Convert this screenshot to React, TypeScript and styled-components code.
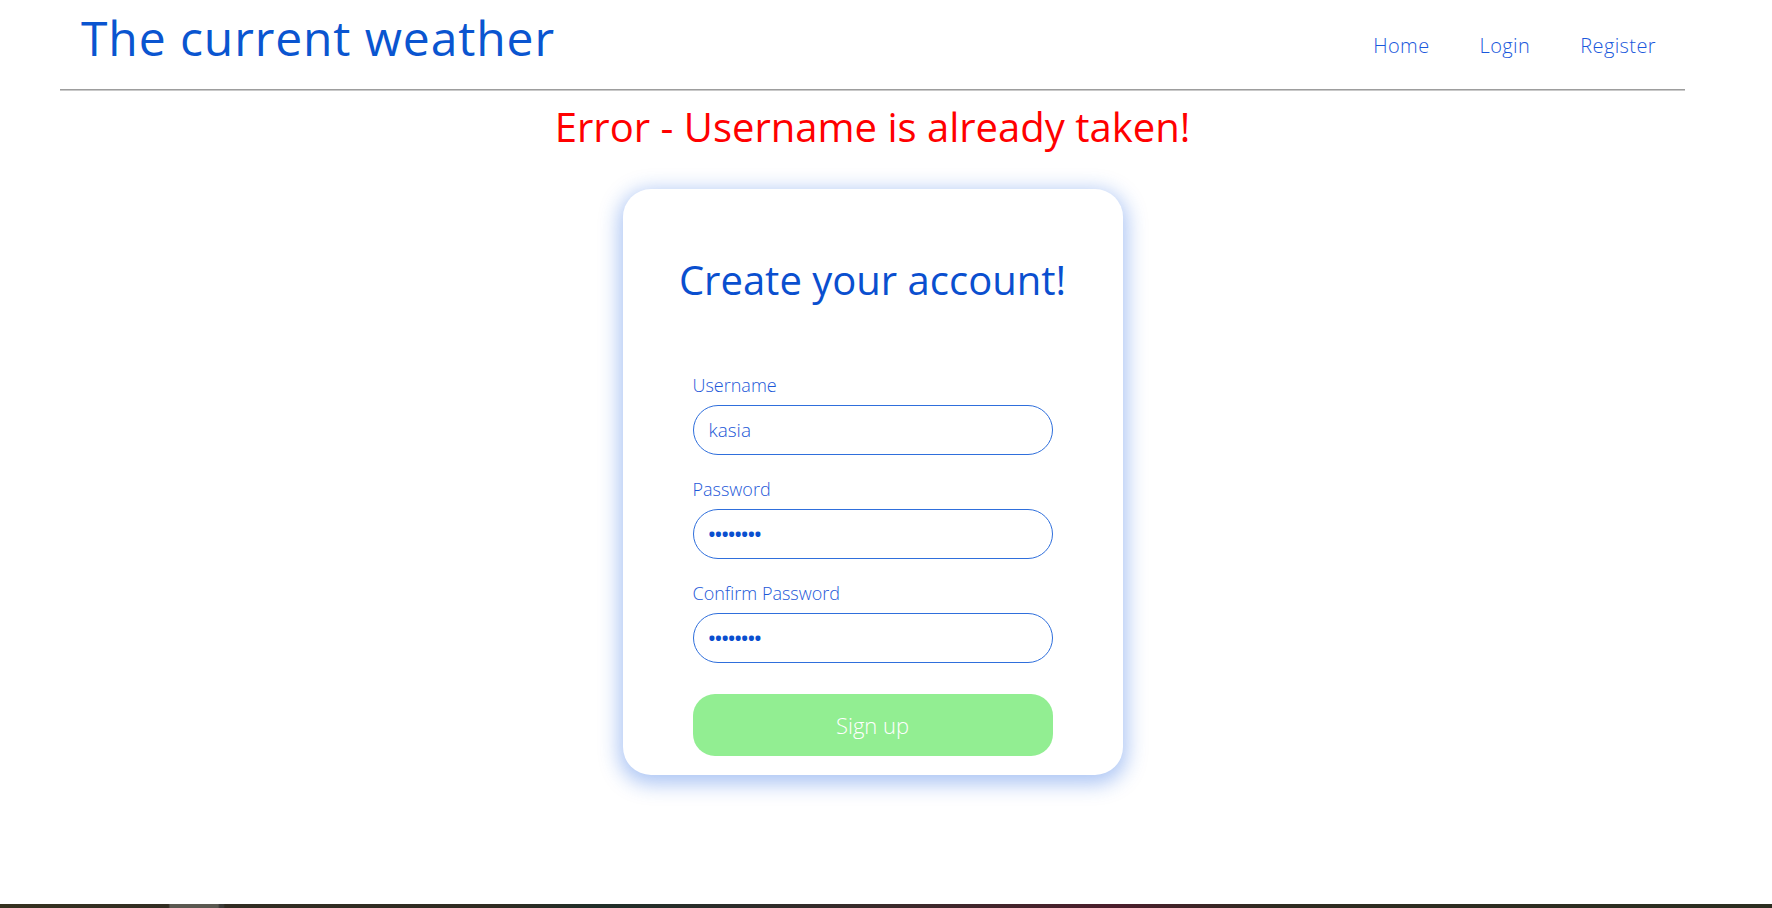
import React from "react";
import styled, { createGlobalStyle } from "styled-components";

const GlobalStyle = createGlobalStyle`
  html, body { margin: 0; padding: 0; background: #ffffff; }
  body { font-family: "Open Sans", Lato, "Noto Sans", sans-serif; }
  * { box-sizing: border-box; }
`;

const Page = styled.div`
  min-height: 100vh;
  display: flex;
  flex-direction: column;
`;

const Content = styled.div`
  width: 1745px;
  flex: 1;
  display: flex;
  flex-direction: column;
  align-items: center;
`;

const Header = styled.header`
  align-self: stretch;
  margin: 0 60px;
  padding: 9px 29px 0 21px;
  display: flex;
  justify-content: space-between;
  align-items: flex-start;
`;

const Title = styled.h1`
  margin: 0;
  font-size: 48px;
  line-height: 58px;
  font-weight: 400;
  letter-spacing: 0.9px;
  color: #0a55d0;
  white-space: nowrap;
`;

const Nav = styled.nav`
  margin-top: 25px;
  display: flex;
  gap: 50px;
`;

const NavLink = styled.a`
  font-size: 20px;
  line-height: 24px;
  font-weight: 300;
  letter-spacing: 0.4px;
  color: #1a58dc;
  text-decoration: none;
  cursor: pointer;
`;

const Rule = styled.div`
  align-self: stretch;
  margin: 22px 60px 0;
  height: 2px;
  border-top: 1px solid #9d9d9d;
  border-bottom: 1px solid #c9c9c9;
`;

const ErrorText = styled.h2`
  margin: 12px 0 0;
  font-size: 40px;
  line-height: 48px;
  font-weight: 400;
  color: #ff0000;
  white-space: nowrap;
`;

const Card = styled.form`
  margin-top: 38px;
  width: 500px;
  padding: 67px 70px 19px;
  background: #ffffff;
  border-radius: 28px;
  box-shadow: 0 5px 20px 4px rgba(25, 95, 225, 0.36);
  display: flex;
  flex-direction: column;
`;

const Heading = styled.h3`
  margin: 0 -40px 70px;
  text-align: center;
  white-space: nowrap;
  font-size: 40px;
  line-height: 48px;
  font-weight: 400;
  color: #0a4fcf;
`;

const Field = styled.div<{ $last?: boolean }>`
  display: flex;
  flex-direction: column;
  margin-bottom: ${(p) => (p.$last ? "31px" : "23px")};
`;

const Label = styled.label`
  font-size: 18px;
  line-height: 22px;
  font-weight: 300;
  color: #1d58d8;
  margin-bottom: 9px;
`;

const Input = styled.input`
  height: 50px;
  width: 100%;
  border: 1px solid #2f6fdc;
  border-radius: 25px;
  padding: 0 15px;
  font-family: "Open Sans", Lato, sans-serif;
  font-size: 19px;
  font-weight: 300;
  color: #1a56d6;
  background: #ffffff;
  outline: none;
  &[type="password"] {
    color: #0a4fcf;
    font-size: 18px;
    letter-spacing: -0.2px;
    font-weight: 700;
  }
`;

const Button = styled.button`
  height: 62px;
  width: 100%;
  border: none;
  border-radius: 22px;
  background: #92ee92;
  color: #ffffff;
  font-family: "Open Sans", Lato, sans-serif;
  font-size: 22px;
  font-weight: 300;
  cursor: pointer;
`;

const TaskBar = styled.div`
  height: 4px;
  width: 100%;
  background: linear-gradient(
    to right,
    #35311f 0%,
    #322d22 9.5%,
    #5a5850 9.6%,
    #5a5850 12.3%,
    #3a3a36 12.4%,
    #3a3a36 12.6%,
    #312c22 12.7%,
    #2f2b21 28%,
    #1f2e28 33.8%,
    #3a2a2a 50%,
    #4b1d2b 63%,
    #2e2b20 72%,
    #2b2e20 100%
  );
`;

export default function App() {
  return (
    <Page>
      <GlobalStyle />
      <Content>
        <Header>
          <Title>The current weather</Title>
          <Nav>
            <NavLink>Home</NavLink>
            <NavLink>Login</NavLink>
            <NavLink>Register</NavLink>
          </Nav>
        </Header>
        <Rule />
        <ErrorText>Error - Username is already taken!</ErrorText>
        <Card onSubmit={(e) => e.preventDefault()}>
          <Heading>Create your account!</Heading>
          <Field>
            <Label htmlFor="username">Username</Label>
            <Input id="username" type="text" defaultValue="kasia" />
          </Field>
          <Field>
            <Label htmlFor="password">Password</Label>
            <Input id="password" type="password" defaultValue="12345678" />
          </Field>
          <Field $last>
            <Label htmlFor="confirm">Confirm Password</Label>
            <Input id="confirm" type="password" defaultValue="12345678" />
          </Field>
          <Button type="submit">Sign up</Button>
        </Card>
      </Content>
      <TaskBar />
    </Page>
  );
}
